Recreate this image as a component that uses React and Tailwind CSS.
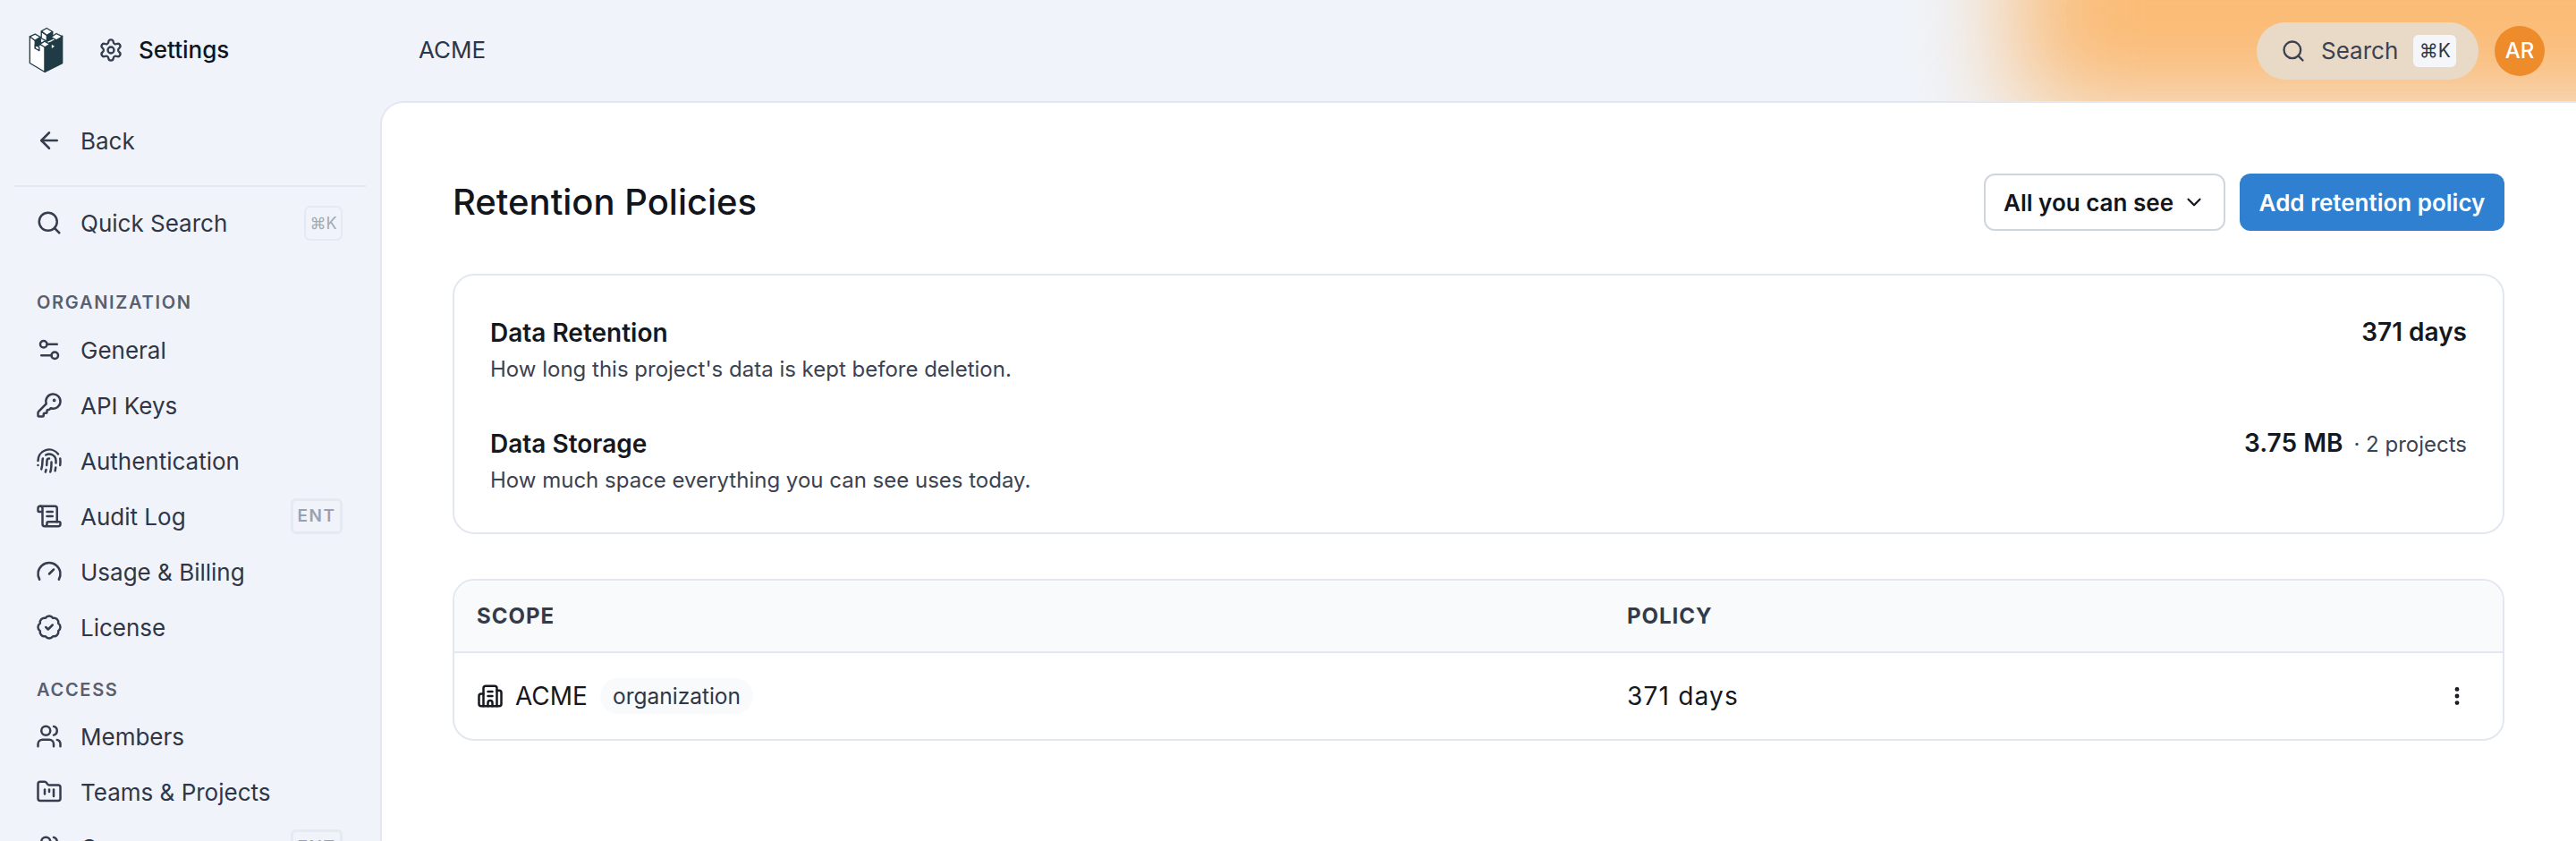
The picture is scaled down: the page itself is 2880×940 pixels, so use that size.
import React from 'react';
import {
  ArrowLeft, Search, Settings, Settings2, KeyRound, Fingerprint, ScrollText, Gauge, BadgeCheck,
  Users, FolderKanban, Building2, ChevronDown, EllipsisVertical,
} from 'lucide-react';

function Logo() {
  return (
    <svg viewBox="94 90 118 156" className="h-[52px] w-[39px] shrink-0" aria-hidden="true">
      <g stroke="#1f3b45" strokeWidth="4" strokeLinejoin="round">
        <polygon points="98,122 98,212 149,242 149,150 98,122" fill="#fff" />
        <polygon points="149,242 208,212 208,120 172,140 149,150" fill="#1f3b45" />
        <polygon points="137,106 156,118 156,138 137,128" fill="#fff" />
        <polygon points="98,122 116,114 134,124 116,136" fill="#fff" />
        <polygon points="116,136 134,124 134,148 116,162" fill="#1f3b45" />
        <polygon points="137,104 155,94 175,106 156,118" fill="#fff" />
        <polygon points="156,118 175,106 175,130 156,138" fill="#1f3b45" />
        <polygon points="170,124 188,112 208,122 188,134" fill="#fff" />
        <polygon points="132,148 148,138 166,148 149,158" fill="#fff" />
        <polygon points="170,146 185,155 170,166" fill="#fff" />
        <polygon points="116,150 130,158 130,170 116,162" fill="#fff" />
      </g>
    </svg>
  );
}

function Item({ icon: Icon, label, badge }) {
  return (
    <div className="flex h-[62px] items-center pr-[42px] pl-[40px]">
      <Icon size={30} strokeWidth={2} className="mr-[20px] shrink-0 text-[#363d4f]" />
      <span className="flex-1 text-[26px] text-[#2f3647]">{label}</span>
      {badge && (
        <span className="flex h-[40px] w-[58px] items-center justify-center rounded-[6px] border-[3px] border-[#e4e9f2] text-[19px] font-semibold tracking-[1.5px] text-[#9aa1ae]">
          {badge}
        </span>
      )}
    </div>
  );
}

function SectionLabel({ children, className }) {
  return (
    <div className={`pl-[41px] text-[20px] leading-[28px] font-semibold tracking-[1.7px] text-[#585f70] ${className}`}>
      {children}
    </div>
  );
}

function Sidebar() {
  return (
    <aside className="w-[425px] shrink-0">
      <div className="mt-[13px] flex h-[62px] items-center pl-[40px]">
        <ArrowLeft size={30} strokeWidth={2} className="mr-[20px] text-[#363d4f]" />
        <span className="text-[26px] text-[#2f3647]">Back</span>
      </div>
      <div className="mx-[16px] mt-[19px] h-[2px] bg-[#e3e8f1]" />
      <div className="mt-[9px] flex h-[62px] items-center pr-[42px] pl-[40px]">
        <Search size={30} strokeWidth={2} className="mr-[20px] text-[#363d4f]" />
        <span className="flex-1 text-[26px] text-[#2f3647]">Quick Search</span>
        <span className="flex h-[39px] w-[43px] items-center justify-center rounded-[7px] border-2 border-[#e4e9f2] text-[18px] text-[#a3a9b5]">⌘K</span>
      </div>
      <SectionLabel className="mt-[44px]">ORGANIZATION</SectionLabel>
      <div className="mt-[8px]">
        <Item icon={Settings2} label="General" />
        <Item icon={KeyRound} label="API Keys" />
        <Item icon={Fingerprint} label="Authentication" />
        <Item icon={ScrollText} label="Audit Log" badge="ENT" />
        <Item icon={Gauge} label="Usage & Billing" />
        <Item icon={BadgeCheck} label="License" />
      </div>
      <SectionLabel className="mt-[25px]">ACCESS</SectionLabel>
      <div className="mt-[7px]">
        <Item icon={Users} label="Members" />
        <Item icon={FolderKanban} label="Teams & Projects" />
        <Item icon={Users} label="Groups" badge="ENT" />
      </div>
    </aside>
  );
}

function Stat({ title, desc, children, className }) {
  return (
    <div className={`flex items-start justify-between ${className}`}>
      <div>
        <div className="text-[28px] leading-[40px] font-semibold text-[#15181f]">{title}</div>
        <div className="mt-[3px] text-[24px] leading-[36px] text-[#3b4252]">{desc}</div>
      </div>
      {children}
    </div>
  );
}

export default function App() {
  return (
    <div className="flex h-[940px] w-[2880px] flex-col overflow-hidden bg-[#f0f4fa] font-[Inter,sans-serif]">
      <header className="relative flex h-[113px] shrink-0 items-center overflow-hidden pr-[35px] pl-[32px]">
        <div className="absolute top-[-100px] right-[-200px] bottom-[-12px] left-[2255px] bg-[#fbb971] blur-[60px]" />
        <div className="relative mb-[2px] flex w-[436px] items-center">
          <Logo />
          <Settings size={28} strokeWidth={2} className="mr-[17px] ml-[39px] text-[#363d4f]" />
          <span className="text-[26px] font-medium text-[#12151c]">Settings</span>
        </div>
        <span className="relative mb-[2px] flex-1 text-[26px] text-[#2f3647]">ACME</span>
        <div className="relative flex h-[64px] w-[248px] items-center rounded-full bg-[#e9dac8] pl-[27px]">
          <Search size={28} strokeWidth={2} className="mr-[17px] text-[#3b4150]" />
          <span className="text-[26px] text-[#3b4150]">Search</span>
          <span className="ml-[17px] flex h-[36px] w-[48px] items-center justify-center rounded-[6px] bg-[#f5f6fa] text-[21px] text-[#2f3647]">⌘K</span>
        </div>
        <div className="relative ml-[18px] flex h-[56px] w-[56px] items-center justify-center rounded-full bg-[#ee8b2a] text-[24px] font-medium text-white">AR</div>
      </header>
      <div className="flex min-h-0 flex-1">
        <Sidebar />
        <main className="flex-1 rounded-tl-[26px] border-t-2 border-l-2 border-[#e3e8f0] bg-white pt-[79px] pr-[80px] pl-[79px]">
          <div className="flex h-[64px] items-center">
            <h1 className="flex-1 text-[40px] font-medium text-[#12151c]">Retention Policies</h1>
            <button className="flex h-[64px] w-[270px] items-center gap-[10px] rounded-[12px] border-2 border-[#d0d6e0] bg-white pl-[20px] text-[26px] font-semibold text-[#12151c]">
              All you can see
              <ChevronDown size={26} strokeWidth={2} />
            </button>
            <button className="ml-[16px] h-[64px] w-[296px] rounded-[12px] bg-[#2f80d0] text-[26px] font-semibold text-white">
              Add retention policy
            </button>
          </div>
          <section className="mt-[48px] h-[291px] rounded-[24px] border-2 border-[#e3e8f0] px-[40px] pt-[44px]">
            <Stat title="Data Retention" desc="How long this project's data is kept before deletion.">
              <span className="text-[28px] leading-[38px] font-semibold text-[#15181f]">371 days</span>
            </Stat>
            <Stat className="mt-[45px]" title="Data Storage" desc="How much space everything you can see uses today.">
              <span className="flex items-baseline gap-[12px]">
                <span className="text-[28px] leading-[38px] font-semibold text-[#15181f]">3.75 MB</span>
                <span className="text-[24px] text-[#3b4252]">· 2 projects</span>
              </span>
            </Stat>
          </section>
          <section className="mt-[50px] overflow-hidden rounded-[24px] border-2 border-[#e3e8f0]">
            <div className="flex h-[81px] items-center border-b-2 border-[#e3e8f0] bg-[#f8fafc] pl-[25px] text-[24px] font-bold tracking-[1px] text-[#343a48]">
              <span className="w-[1286px]">SCOPE</span>
              <span>POLICY</span>
            </div>
            <div className="flex h-[96px] items-center pr-[38px] pl-[25px] text-[#15181f]">
              <div className="flex w-[1286px] items-center">
                <Building2 size={30} strokeWidth={2} className="mr-[13px]" />
                <span className="text-[28px]">ACME</span>
                <span className="ml-[14px] flex h-[40px] items-center rounded-full bg-[#f8fafc] px-[14px] text-[24.5px] text-[#2f3647]">organization</span>
              </div>
              <span className="flex-1 text-[28px] tracking-[1.2px]">371 days</span>
              <EllipsisVertical size={26} strokeWidth={2.5} />
            </div>
          </section>
        </main>
      </div>
    </div>
  );
}
